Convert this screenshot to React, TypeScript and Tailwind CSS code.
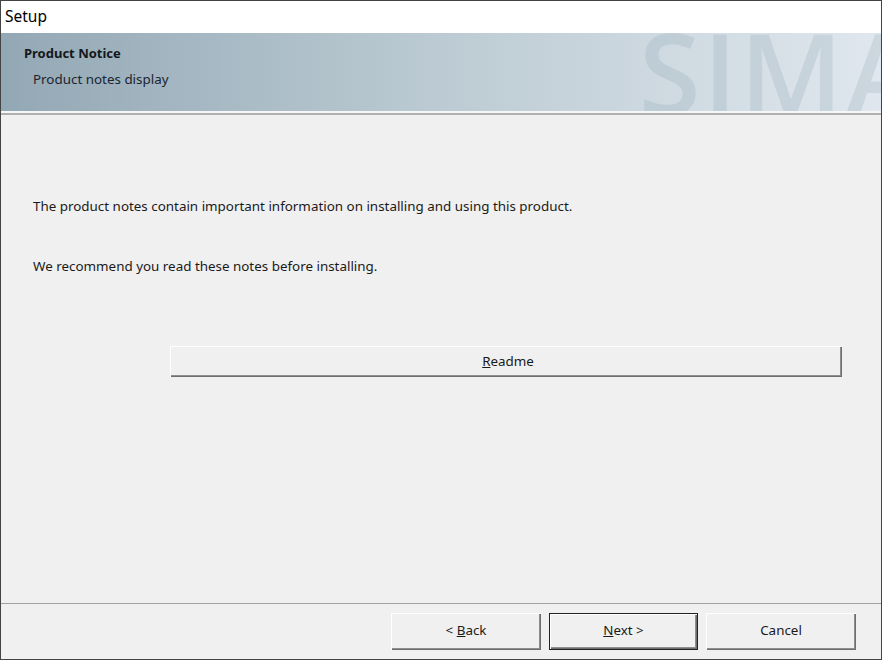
import type { ReactNode } from "react";

function WinButton({ children, active, tall }: { children: ReactNode; active?: boolean; tall?: boolean }) {
  return (
    <button
      className={`flex items-center justify-center bg-[#f0f0f0] text-[13.4px] text-[#1a1a1a] shadow-[inset_1px_1px_0_#ffffff,inset_-1px_-1px_0_#6e6e6e,inset_-2px_-2px_0_#8e8e8e] ${
        tall ? "h-[37px] pb-[2px]" : "h-[31px] pb-[1px] pl-[4px]"
      } ${active ? "border border-[#222222]" : ""}`}
    >
      <span>{children}</span>
    </button>
  );
}

export default function App() {
  return (
    <div className="w-[882px] h-[660px] flex flex-col bg-[#f0f0f0] border border-[#444444] font-['Noto_Sans',sans-serif] overflow-hidden">
      {/* Title bar */}
      <div className="h-[32px] shrink-0 bg-white flex items-center pl-1 pb-[1px] text-[15.5px] text-black">Setup</div>

      {/* Banner */}
      <div className="h-[78px] shrink-0 relative overflow-hidden bg-gradient-to-r from-[#93a8b5] via-[#bccbd3] to-[#e0e7ee] pl-[23px] pt-[10px]">
        <div className="absolute left-[638px] top-[-31px] text-[112px] leading-[140px] font-semibold font-['Open_Sans',sans-serif] text-[#8fa6b5]/25 tracking-[2.5px]">
          SIMA
        </div>
        <div className="relative text-[13px] leading-[20px] font-bold text-[#14181c]">Product Notice</div>
        <div className="relative text-[13.4px] leading-[20px] mt-[6px] ml-[9px] text-[#1c2430]">Product notes display</div>
      </div>
      <div className="h-[4px] shrink-0 border-t-2 border-b-2 border-t-[#f4f6f7] border-b-[#b0b0b0]" />

      {/* Body */}
      <div className="flex-1 flex flex-col pl-[32px] pr-[39px] pt-[81px] text-[13.4px] text-[#1a1a1a]">
        <p className="leading-[20px]">The product notes contain important information on installing and using this product.</p>
        <p className="leading-[20px] mt-[40px]">We recommend you read these notes before installing.</p>
        <div className="mt-[70px] ml-[137px] grid">
          <WinButton>
            <u>R</u>eadme
          </WinButton>
        </div>
      </div>

      {/* Footer */}
      <div className="h-[56px] shrink-0 border-t border-[#a0a0a0] flex justify-end gap-[8px] pt-[9px] pr-[25px]">
        <div className="w-[150px] grid">
          <WinButton tall>
            &lt; <u>B</u>ack
          </WinButton>
        </div>
        <div className="w-[149px] grid">
          <WinButton tall active>
            <u>N</u>ext &gt;
          </WinButton>
        </div>
        <div className="w-[150px] grid">
          <WinButton tall>Cancel</WinButton>
        </div>
      </div>
    </div>
  );
}
